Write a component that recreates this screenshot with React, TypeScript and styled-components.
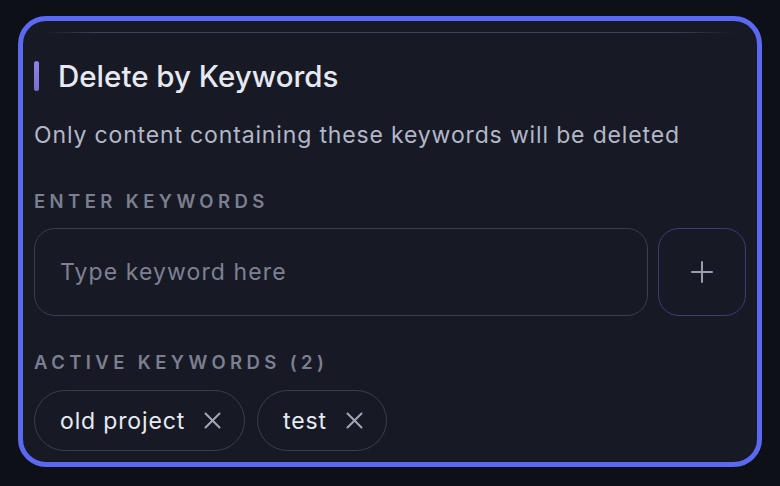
import React from "react";
import styled, { createGlobalStyle } from "styled-components";

const Global = createGlobalStyle`
  html, body { margin: 0; padding: 0; background: #0e1017; }
  body { font-family: Inter, "Noto Sans", "Liberation Sans", sans-serif; -webkit-font-smoothing: antialiased; }
  * { box-sizing: border-box; }
`;

const Page = styled.div`
  width: 780px;
  height: 486px;
  padding: 16px 18px 0 18px;
  background: #0e1017;
`;

const Card = styled.section`
  width: 744px;
  height: 451px;
  border: 5px solid #5b68f1;
  border-radius: 28px;
  background: #171a25;
  padding: 11px 11px 0 11px;
  display: flex;
  flex-direction: column;
  overflow: hidden;
`;

const TopLine = styled.div`
  height: 1px;
  margin: 0 10px 0 10px;
  background: linear-gradient(90deg, rgba(70,73,88,0) 0%, rgba(70,73,88,0.9) 8%, rgba(70,73,88,0.9) 90%, rgba(70,73,88,0) 100%);
`;

const Header = styled.div`
  display: flex;
  align-items: center;
  gap: 19px;
  margin-top: 28px;
  height: 30px;
`;

const Accent = styled.span`
  width: 5px;
  height: 30px;
  border-radius: 3px;
  background: linear-gradient(180deg, #8f82e6, #7a6fd2);
`;

const Title = styled.h2`
  margin: 0;
  font-size: 29.5px;
  font-weight: 500;
  color: #e7e9f1;
  line-height: 30px;
  letter-spacing: 0px;
`;

const Subtitle = styled.p`
  margin: 29px 0 0 0;
  font-size: 23px;
  line-height: 30px;
  color: #b3b7c7;
  font-weight: 400;
  letter-spacing: 0.85px;
`;

const Label = styled.div<{ $top: number }>`
  margin-top: ${(p) => p.$top}px;
  font-size: 18.5px;
  line-height: 22px;
  font-weight: 600;
  letter-spacing: 4.4px;
  color: #7b7f90;
  text-transform: uppercase;
`;

const InputRow = styled.div`
  display: flex;
  gap: 10px;
  margin-top: 16px;
`;

const Input = styled.input`
  flex: 1;
  height: 88px;
  border: 1.5px solid #3b3e4b;
  border-radius: 21px;
  background: transparent;
  padding: 0 25px;
  font-family: inherit;
  font-size: 23px;
  letter-spacing: 1.1px;
  color: #e7e9f1;
  outline: none;
  &::placeholder { color: #7d8192; }
`;

const AddButton = styled.button`
  width: 88px;
  height: 88px;
  flex: none;
  border: 1.5px solid #3d3d74;
  border-radius: 21px;
  background: transparent;
  display: flex;
  align-items: center;
  justify-content: center;
  padding: 0;
  cursor: pointer;
`;

const Chips = styled.div`
  display: flex;
  gap: 12px;
  margin-top: 17px;
`;

const Chip = styled.div`
  height: 61px;
  border: 1.5px solid #3b3e4b;
  border-radius: 31px;
  display: flex;
  align-items: center;
  gap: 19px;
  padding: 0 23px 0 25px;
  font-size: 23px;
  letter-spacing: 0.85px;
  color: #e8eaf2;
`;

const ChipClose = styled.span`
  display: flex;
  align-items: center;
`;

const Plus = () => (
  <svg width="24" height="24" viewBox="0 0 24 24" fill="none" stroke="#9a9db0" strokeWidth="2" strokeLinecap="round">
    <path d="M12 2v20M2 12h20" />
  </svg>
);

const Cross = () => (
  <svg width="17" height="17" viewBox="0 0 17 17" fill="none" stroke="#a3a6b6" strokeWidth="2" strokeLinecap="round">
    <path d="M1.5 1.5l14 14M15.5 1.5l-14 14" />
  </svg>
);

const keywords = ["old project", "test"];

export default function App() {
  return (
    <Page>
      <Global />
      <Card>
        <TopLine />
        <Header>
          <Accent />
          <Title>Delete by Keywords</Title>
        </Header>
        <Subtitle>Only content containing these keywords will be deleted</Subtitle>
        <Label $top={40}>Enter Keywords</Label>
        <InputRow>
          <Input placeholder="Type keyword here" />
          <AddButton aria-label="Add keyword">
            <Plus />
          </AddButton>
        </InputRow>
        <Label $top={35}>Active Keywords ({keywords.length})</Label>
        <Chips>
          {keywords.map((k) => (
            <Chip key={k}>
              {k}
              <ChipClose>
                <Cross />
              </ChipClose>
            </Chip>
          ))}
        </Chips>
      </Card>
    </Page>
  );
}
